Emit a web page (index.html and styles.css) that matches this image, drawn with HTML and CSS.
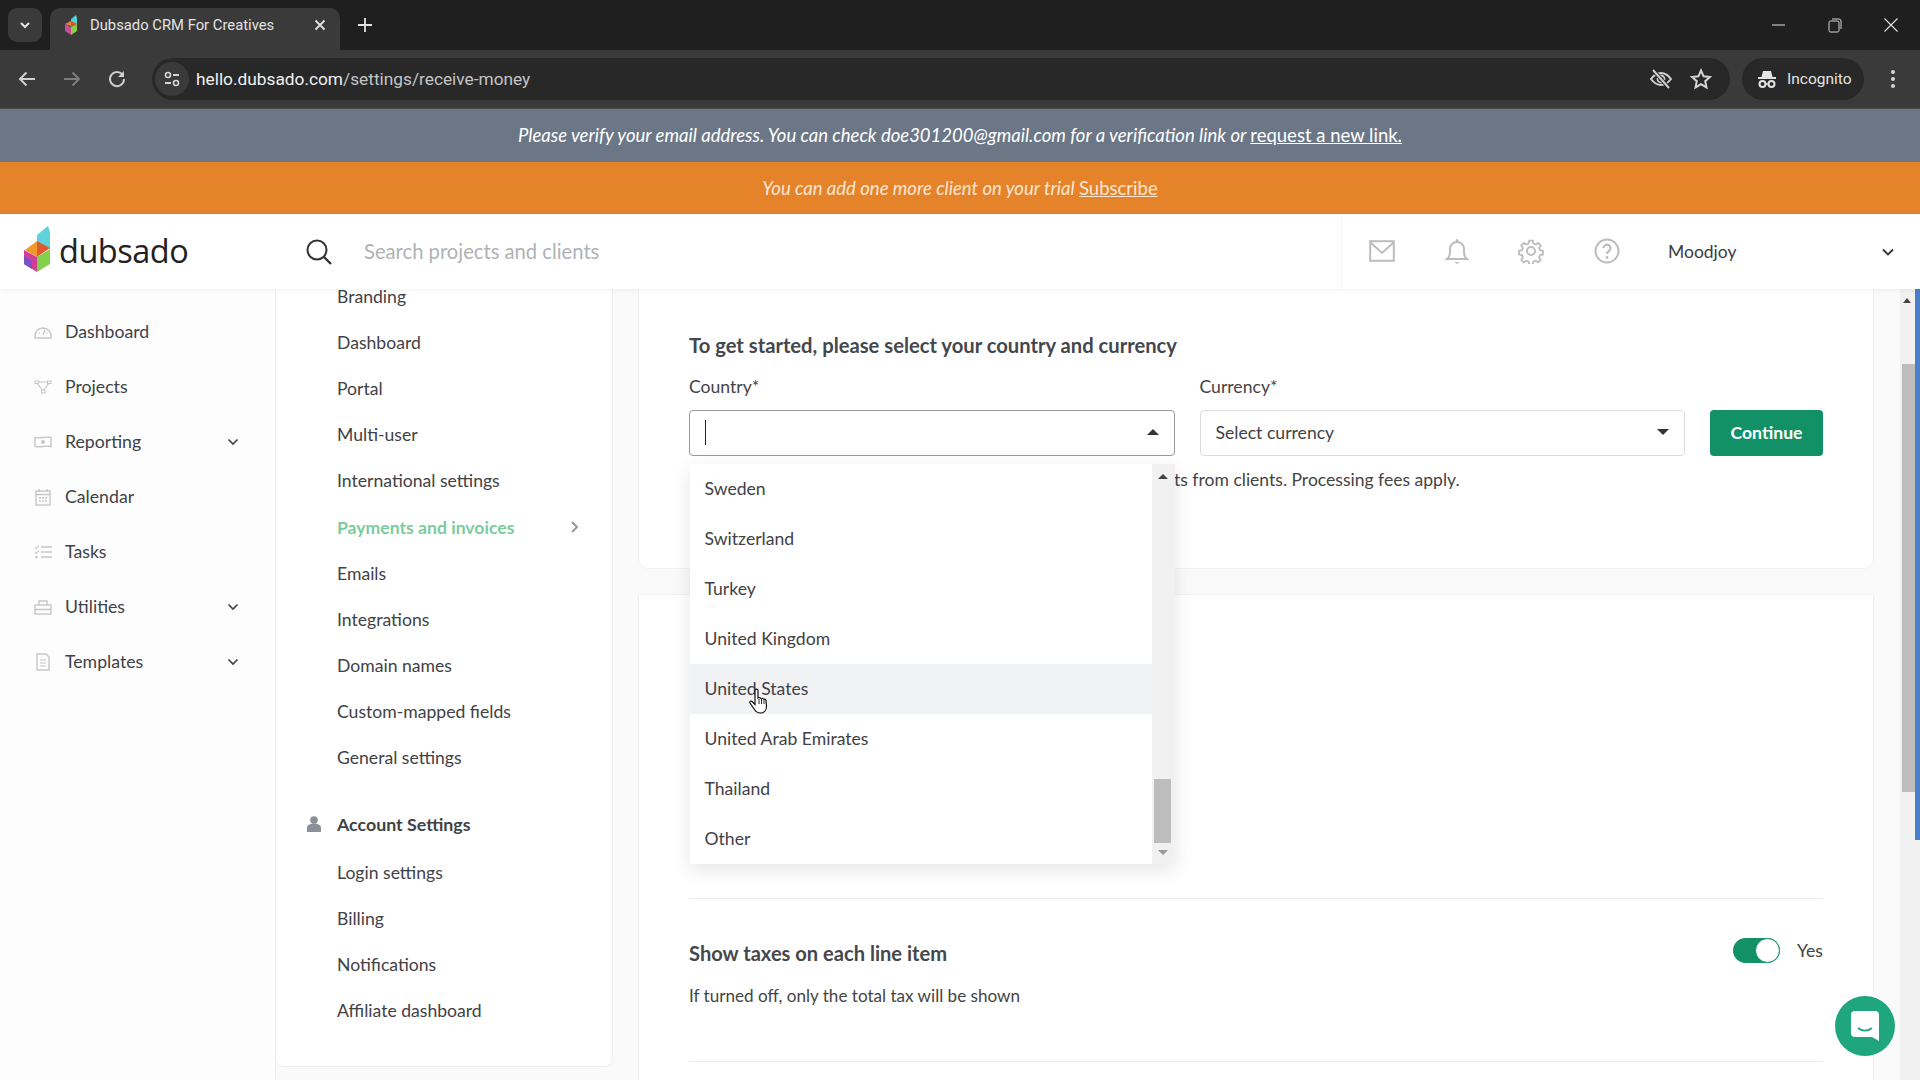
FILE: index.html
```html
<!DOCTYPE html>
<html lang="en">
<head>
    <meta charset="UTF-8">
    <title>Dubsado CRM For Creatives</title>
    <link rel="stylesheet" href="styles.css">
</head>
<body>
    <div class="tabstrip">
        <div class="tab-search">
            <svg width="14" height="14" viewBox="0 0 14 14"><path d="M3 5l4 4 4-4" fill="none" stroke="#e3e3e3" stroke-width="2"/></svg>
        </div>
        <div class="tab">
            <svg class="favicon" width="14" height="20" viewBox="0 0 14 20">
                <polygon points="7,4 12,0 13,3 13,9 7,11" fill="#55cfd6"/>
                <polygon points="1,9 7,6 7,11" fill="#e8862c"/>
                <polygon points="7,6 13,9 7,12" fill="#d9502f"/>
                <polygon points="1,9 7,12 7,20 1,16" fill="#c84a9a"/>
                <polygon points="7,12 13,9 13,16 7,20" fill="#8ccc45"/>
            </svg>
            <span class="tab-title">Dubsado CRM For Creatives</span>
            <svg class="tab-close" width="14" height="14" viewBox="0 0 14 14"><path d="M2.5 2.5l9 9M11.5 2.5l-9 9" stroke="#e3e3e3" stroke-width="1.8"/></svg>
        </div>
        <svg class="new-tab" width="16" height="16" viewBox="0 0 16 16"><path d="M8 1v14M1 8h14" stroke="#e3e3e3" stroke-width="1.8"/></svg>
        <div class="window-controls">
            <svg width="16" height="16" viewBox="0 0 16 16"><path d="M1 8h13" stroke="#e3e3e3" stroke-width="1"/></svg>
            <svg width="16" height="16" viewBox="0 0 16 16"><rect x="2" y="4" width="10" height="11" rx="1.5" fill="none" stroke="#d5d5d5"/><path d="M5 2h7a2 2 0 0 1 2 2v8" fill="none" stroke="#d5d5d5"/></svg>
            <svg width="16" height="16" viewBox="0 0 16 16"><path d="M1.5 1.5l13 13M14.5 1.5l-13 13" stroke="#e3e3e3" stroke-width="1.1"/></svg>
        </div>
    </div>

    <div class="toolbar">
        <svg width="20" height="20" viewBox="0 0 20 20"><path d="M18 10H3M9.5 3.5L3 10l6.5 6.5" fill="none" stroke="#cfcfcf" stroke-width="2"/></svg>
        <svg width="20" height="20" viewBox="0 0 20 20"><path d="M2 10h15M10.500 3.500L17 10l-6.500 6.500" fill="none" stroke="#7d7d7d" stroke-width="2"/></svg>
        <svg width="20" height="20" viewBox="0 0 20 20"><path d="M16 6.500A7 7 0 1 0 17 10" fill="none" stroke="#cfcfcf" stroke-width="2"/><path d="M17 2v6h-6z" fill="#cfcfcf"/></svg>
        <div class="address-bar">
            <div class="site-info">
                <svg width="18" height="18" viewBox="0 0 18 18"><circle cx="5" cy="5" r="2.500" fill="none" stroke="#d5d5d5" stroke-width="1.600"/><path d="M10 5h6M2 13h6" stroke="#d5d5d5" stroke-width="1.800"/><circle cx="13" cy="13" r="2.500" fill="none" stroke="#d5d5d5" stroke-width="1.600"/></svg>
            </div>
            <span class="url">hello.dubsado.com<span class="url-path">/settings/receive-money</span></span>
            <svg class="eye-off" width="24" height="22" viewBox="0 0 24 22"><path d="M2 11c3-4 6.500-6 10-6s7 2 10 6c-3 4-6.500 6-10 6s-7-2-10-6z" fill="none" stroke="#cfcfcf" stroke-width="2"/><circle cx="12" cy="11" r="3.500" fill="none" stroke="#cfcfcf" stroke-width="1.800"/><path d="M4 2l16 18" stroke="#282828" stroke-width="4"/><path d="M4 2l16 18" stroke="#cfcfcf" stroke-width="2"/></svg>
            <svg class="star" width="22" height="22" viewBox="0 0 22 22"><path d="M11 2.500l2.600 5.800 6.300.7-4.700 4.200 1.300 6.200L11 16.200l-5.500 3.200 1.300-6.200L2.100 9l6.300-.7z" fill="none" stroke="#d5d5d5" stroke-width="2"/></svg>
        </div>
        <div class="incognito">
            <svg width="20" height="20" viewBox="0 0 20 20"><path d="M6 2h8l1.500 6h-11z" fill="#e3e3e3"/><path d="M1 9h18" stroke="#e3e3e3" stroke-width="2"/><circle cx="5.500" cy="15" r="3" fill="none" stroke="#e3e3e3" stroke-width="2"/><circle cx="14.500" cy="15" r="3" fill="none" stroke="#e3e3e3" stroke-width="2"/><path d="M8.500 15h3" stroke="#e3e3e3" stroke-width="1.500"/></svg>
            <span>Incognito</span>
        </div>
        <svg class="chrome-menu" width="6" height="20" viewBox="0 0 6 20"><circle cx="3" cy="3" r="2" fill="#d5d5d5"/><circle cx="3" cy="10" r="2" fill="#d5d5d5"/><circle cx="3" cy="17" r="2" fill="#d5d5d5"/></svg>
    </div>

    <div class="banner banner-verify">
        <p>Please verify your email address. You can check doe301200@gmail.com for a verification link or <a>request a new link.</a></p>
    </div>
    <div class="banner banner-trial">
        <p>You can add one more client on your trial <a>Subscribe</a></p>
    </div>

    <header class="app-header">
        <div class="brand">
            <svg class="brand-mark" width="28" height="46" viewBox="0 0 28 46">
                <polygon points="14,9 25,0 27,6 27,23 14,16" fill="#5fd3dc"/>
                <polygon points="2,24 14,15 19,23 14,31" fill="#ef9a2c"/>
                <polygon points="14,15 27,22 14,31" fill="#df5a30"/>
                <polygon points="1,24 14,31 14,46 1,38" fill="#cf3f97"/>
                <polygon points="1,30 9,35 9,43 1,38" fill="#7e50c6"/>
                <polygon points="14,31 27,23 27,38 14,46" fill="#83d04d"/>
            </svg>
            <span class="brand-name">dubsado</span>
        </div>
        <div class="search">
            <svg width="28" height="28" viewBox="0 0 28 28"><circle cx="12" cy="12" r="9.500" fill="none" stroke="#333" stroke-width="2"/><path d="M19 19l7 7" stroke="#333" stroke-width="2.400"/></svg>
            <span class="search-placeholder">Search projects and clients</span>
        </div>
        <div class="header-icons">
            <svg width="26" height="22" viewBox="0 0 26 22"><rect x="1.200" y="1.200" width="23.600" height="19.600" fill="none" stroke="#bdbdbd" stroke-width="2"/><path d="M1.500 2.500L13 13 24.500 2.500" fill="none" stroke="#bdbdbd" stroke-width="2"/></svg>
            <svg width="24" height="28" viewBox="0 0 24 28"><path d="M2 22c3-2.500 3-5 3-10a7 7 0 0 1 14 0c0 5 0 7.500 3 10z" fill="none" stroke="#bdbdbd" stroke-width="2"/><circle cx="12" cy="3.500" r="1.500" fill="#bdbdbd"/><path d="M9 25h6l-3 2z" fill="#bdbdbd"/></svg>
            <svg width="26" height="26" viewBox="0 0 26 26"><path d="M11 1.500h4l.7 3.300 2.500 1 2.800-1.800 2.800 2.800-1.800 2.800 1 2.500 3.300.7v4l-3.300.7-1 2.500 1.800 2.800-2.800 2.800-2.800-1.800-2.500 1-.7 3.300h-4l-.7-3.300-2.500-1-2.800 1.800-2.800-2.800 1.800-2.800-1-2.500-3.300-.7v-4l3.300-.7 1-2.500-1.800-2.800 2.800-2.800 2.800 1.800 2.500-1z" transform="translate(1.300 1.300) scale(.9)" fill="none" stroke="#bdbdbd" stroke-width="2"/><circle cx="13" cy="13" r="4" fill="none" stroke="#bdbdbd" stroke-width="2"/></svg>
            <svg width="26" height="26" viewBox="0 0 26 26"><circle cx="13" cy="13" r="11.500" fill="none" stroke="#bdbdbd" stroke-width="2"/><path d="M9.500 10a3.500 3.500 0 1 1 5.500 3c-1.300.9-2 1.500-2 3" fill="none" stroke="#bdbdbd" stroke-width="2.200"/><circle cx="13" cy="19.500" r="1.400" fill="#bdbdbd"/></svg>
        </div>
        <div class="account">
            <span>Moodjoy</span>
            <svg class="chevron" width="14" height="14" viewBox="0 0 14 14"><path d="M2 4.500l5 5 5-5" fill="none" stroke="#333" stroke-width="1.800"/></svg>
        </div>
    </header>

    <div class="page">
        <nav class="sidebar">
            <a class="side-item">
                <svg class="side-icon" width="18" height="14" viewBox="0 0 18 14"><path d="M1 11a8 8 0 1 1 16 0v2H1z" fill="none" stroke="#c4c6c8" stroke-width="1.400"/><path d="M9 10l2-5M5 8h1M12.500 8h1" stroke="#c4c6c8" stroke-width="1.300"/></svg>
                <span>Dashboard</span>
            </a>
            <a class="side-item">
                <svg class="side-icon" width="18" height="14" viewBox="0 0 18 14"><path d="M3 2h12M3 3l6 8M15 3l-6 8" stroke="#c4c6c8" stroke-width="1.200"/><rect x="1" y="1" width="3.500" height="2.500" fill="#fff" stroke="#c4c6c8"/><rect x="13.500" y="1" width="3.500" height="2.500" fill="#fff" stroke="#c4c6c8"/><rect x="7.500" y="10" width="3.500" height="3" fill="#fff" stroke="#c4c6c8"/></svg>
                <span>Projects</span>
            </a>
            <a class="side-item">
                <svg class="side-icon" width="18" height="14" viewBox="0 0 18 14"><path d="M1 2.500c5 1.500 11-1.500 16 0v9c-5-1.500-11 1.500-16 0z" fill="none" stroke="#c4c6c8" stroke-width="1.400"/><circle cx="9" cy="7" r="2" fill="#c4c6c8"/></svg>
                <span>Reporting</span>
                <svg class="side-chevron" width="12" height="12" viewBox="0 0 12 12"><path d="M1.500 3.500L6 8l4.500-4.500" fill="none" stroke="#444" stroke-width="1.700"/></svg>
            </a>
            <a class="side-item">
                <svg class="side-icon" width="18" height="18" viewBox="0 0 18 18"><rect x="2" y="3" width="14" height="14" fill="none" stroke="#c4c6c8" stroke-width="1.400"/><path d="M2 6.500h14M5 1v3M13 1v3" stroke="#c4c6c8" stroke-width="1.400"/><path d="M5 10h8M5 13h8" stroke="#c4c6c8" stroke-width="1.500" stroke-dasharray="2 1"/></svg>
                <span>Calendar</span>
            </a>
            <a class="side-item">
                <svg class="side-icon" width="18" height="14" viewBox="0 0 18 14"><path d="M7 2h11M7 7h11M7 12h11" stroke="#c4c6c8" stroke-width="1.400"/><path d="M1 2l1.500 1.500L5 .5M1 7l1.500 1.500L5 5.500" fill="none" stroke="#c4c6c8" stroke-width="1.100"/><circle cx="2.500" cy="12" r="1.300" fill="#c4c6c8"/></svg>
                <span>Tasks</span>
            </a>
            <a class="side-item">
                <svg class="side-icon" width="18" height="16" viewBox="0 0 18 16"><rect x="1" y="6" width="16" height="9" fill="none" stroke="#c4c6c8" stroke-width="1.400"/><path d="M5 6V2h8v4M1 10.500h16" fill="none" stroke="#c4c6c8" stroke-width="1.400"/></svg>
                <span>Utilities</span>
                <svg class="side-chevron" width="12" height="12" viewBox="0 0 12 12"><path d="M1.500 3.500L6 8l4.500-4.500" fill="none" stroke="#444" stroke-width="1.700"/></svg>
            </a>
            <a class="side-item">
                <svg class="side-icon" width="18" height="18" viewBox="0 0 18 18"><path d="M3 1h9l3 3v13H3z" fill="none" stroke="#c4c6c8" stroke-width="1.400"/><path d="M6 7h6M6 10h6M6 13h6" stroke="#c4c6c8" stroke-width="1.200"/></svg>
                <span>Templates</span>
                <svg class="side-chevron" width="12" height="12" viewBox="0 0 12 12"><path d="M1.500 3.500L6 8l4.500-4.500" fill="none" stroke="#444" stroke-width="1.700"/></svg>
            </a>
        </nav>

        <nav class="settings-nav">
            <a class="settings-item">Branding</a>
            <a class="settings-item">Dashboard</a>
            <a class="settings-item">Portal</a>
            <a class="settings-item">Multi-user</a>
            <a class="settings-item">International settings</a>
            <a class="settings-item is-active">Payments and invoices
                <svg width="10" height="14" viewBox="0 0 10 14"><path d="M2 2l5 5-5 5" fill="none" stroke="#999" stroke-width="2"/></svg>
            </a>
            <a class="settings-item">Emails</a>
            <a class="settings-item">Integrations</a>
            <a class="settings-item">Domain names</a>
            <a class="settings-item">Custom-mapped fields</a>
            <a class="settings-item">General settings</a>
            <div class="settings-heading">
                <svg width="14" height="16" viewBox="0 0 14 16"><circle cx="7" cy="4" r="3.800" fill="#8a8f98"/><path d="M0 16v-4c0-3 3-4.500 7-4.500s7 1.500 7 4.500v4z" fill="#8a8f98"/></svg>
                <span>Account Settings</span>
            </div>
            <a class="settings-item">Login settings</a>
            <a class="settings-item">Billing</a>
            <a class="settings-item">Notifications</a>
            <a class="settings-item">Affiliate dashboard</a>
        </nav>

        <main class="content">
            <section class="card card-setup">
                <h2 class="card-title">To get started, please select your country and currency</h2>
                <div class="form-row">
                    <div class="field">
                        <label>Country*</label>
                        <div class="select is-open">
                            <span class="caret-bar"></span>
                            <span class="arrow arrow-up"></span>
                        </div>
                    </div>
                    <div class="field">
                        <label>Currency*</label>
                        <div class="select">
                            <span>Select currency</span>
                            <span class="arrow arrow-down"></span>
                        </div>
                    </div>
                    <button class="btn-continue">Continue</button>
                </div>
                <p class="help-text">ts from clients. Processing fees apply.</p>
            </section>

            <section class="card card-tax">
                <div class="tax-row">
                    <div>
                        <h3 class="tax-title">Show taxes on each line item</h3>
                        <p class="tax-note">If turned off, only the total tax will be shown</p>
                    </div>
                    <div class="toggle-wrap">
                        <span class="toggle"><span class="toggle-knob"></span></span>
                        <span>Yes</span>
                    </div>
                </div>
            </section>

            <div class="dropdown">
                <ul class="dropdown-list">
                    <li>Sweden</li>
                    <li>Switzerland</li>
                    <li>Turkey</li>
                    <li>United Kingdom</li>
                    <li class="is-hover">United States</li>
                    <li>United Arab Emirates</li>
                    <li>Thailand</li>
                    <li>Other</li>
                </ul>
                <div class="dropdown-scroll">
                    <span class="mini-up"></span>
                    <span class="mini-thumb"></span>
                    <span class="mini-down"></span>
                </div>
            </div>
        </main>

        <div class="page-scrollbar">
            <span class="page-scroll-up"></span>
            <span class="page-thumb"></span>
        </div>

        <div class="chat-button">
            <svg width="28" height="30" viewBox="0 0 28 30"><path d="M4 0h20a4 4 0 0 1 4 4v26l-7-4H4a4 4 0 0 1-4-4V4a4 4 0 0 1 4-4z" fill="#fff"/><path d="M7 17c4 3.500 10 3.500 14 0" fill="none" stroke="#1fa67e" stroke-width="1.800"/></svg>
        </div>

        <svg class="hand-cursor" width="20" height="26" viewBox="0 0 20 26"><path d="M6 2c1-1.500 3-1 3 .5V10l1-.5c1 0 1.500.3 2 1 1-.5 2 0 2.500.8 1-.3 2 .2 2.500 1l.5 6c0 4-2.500 6.700-6 6.700-3 0-4.500-1-6-3.500L1 15c-.7-1.500 1-2.500 2-1.500l3 3z" fill="#fff" stroke="#111" stroke-width="1.200"/><path d="M10 11v5M12.500 11v5M15 12v4" stroke="#111" stroke-width=".9"/></svg>
    </div>
</body>
</html>
```

FILE: styles.css
```css
* {
    box-sizing: border-box;
}

html, body {
    margin: 0;
    height: 1080px;
    overflow: hidden;
}

body {
    display: flex;
    flex-direction: column;
    font-family: "Lato", "Liberation Sans", sans-serif;
    color: #3a3d42;
    background: #fafafa;
}

/* browser chrome */
.tabstrip {
    height: 50px;
    flex: none;
    display: flex;
    align-items: flex-end;
    background: #1f1f1f;
    padding-left: 8px;
    color: #e3e3e3;
    font-family: "Roboto", "Liberation Sans", sans-serif;
}

.tab-search {
    width: 34px;
    height: 34px;
    margin-bottom: 8px;
    border-radius: 9px;
    background: #3a3a3a;
    display: flex;
    align-items: center;
    justify-content: center;
}

.tab {
    width: 290px;
    height: 42px;
    margin-left: 8px;
    padding: 0 13px 8px 14px;
    border-radius: 10px 10px 0 0;
    background: #3a3a3a;
    display: flex;
    align-items: center;
}

.favicon {
    flex: none;
}

.tab-title {
    margin-left: 12px;
    flex: 1;
    font-size: 14.800px;
}

.new-tab {
    margin: 0 0 17px 17px;
}

.window-controls {
    margin-left: auto;
    margin-bottom: 17px;
    padding-right: 21px;
    display: flex;
    gap: 40px;
}

.toolbar {
    height: 59px;
    flex: none;
    display: flex;
    align-items: center;
    gap: 25px;
    padding-left: 17px;
    background: #3a3a3a;
    border-bottom: 1px solid #4a4a4a;
}

.address-bar {
    width: 1578px;
    height: 42px;
    border-radius: 21px;
    background: #282828;
    display: flex;
    align-items: center;
    color: #e3e3e3;
    font-family: "Roboto", "Liberation Sans", sans-serif;
}

.site-info {
    width: 34px;
    height: 34px;
    margin-left: 3px;
    border-radius: 50%;
    background: #3a3a3a;
    display: flex;
    align-items: center;
    justify-content: center;
}

.url {
    margin-left: 7px;
    font-size: 17.300px;
    color: #f1f1f1;
}

.url-path {
    color: #c4c4c4;
}

.eye-off {
    margin-left: auto;
}

.star {
    margin: 0 18px 0 17px;
}

.incognito {
    width: 122px;
    height: 42px;
    margin-left: -13px;
    padding-left: 15px;
    border-radius: 21px;
    background: #282828;
    color: #e3e3e3;
    display: flex;
    align-items: center;
    gap: 10px;
    font-size: 15.500px;
    font-family: "Roboto", "Liberation Sans", sans-serif;
}

.chrome-menu {
    margin-left: 1px;
}

/* notice banners */
.banner {
    flex: none;
    display: flex;
    align-items: center;
    justify-content: center;
    font-style: italic;
    font-size: 18.500px;
}

.banner p {
    margin: 0;
}

.banner a {
    font-style: normal;
    text-decoration: underline;
}

.banner-verify {
    height: 53px;
    padding-bottom: 2px;
    background: #6b7787;
    color: #fff;
}

.banner-trial {
    height: 52px;
    background: #e5832b;
    color: #fbe6d2;
}

/* app header */
.app-header {
    height: 75px;
    flex: none;
    display: flex;
    align-items: center;
    background: #fff;
    box-shadow: 0 1px 6px rgba(0, 0, 0, .06);
    position: relative;
    z-index: 2;
}

.brand {
    width: 275px;
    flex: none;
    padding-left: 23px;
    display: flex;
    align-items: center;
    gap: 8px;
}

.brand-mark {
    margin-top: -5px;
}

.brand-name {
    font-size: 32.500px;
    color: #222;
    font-family: "Open Sans", "Liberation Sans", sans-serif;
    letter-spacing: -.5px;
    margin-top: -3px;
}

.search {
    width: 1067px;
    flex: none;
    height: 100%;
    padding-left: 30px;
    display: flex;
    align-items: center;
    gap: 31px;
    border-right: 1px solid #f6f6f6;
}

.search-placeholder {
    font-size: 20.200px;
    color: #b0b2b5;
    margin-bottom: 2px;
}

.header-icons {
    width: 326px;
    flex: none;
    padding: 0 0 2px 27px;
    display: flex;
    align-items: center;
    gap: 49.500px;
}

.account {
    flex: 1;
    padding-right: 25px;
    display: flex;
    align-items: center;
    justify-content: space-between;
    font-size: 17.500px;
}

/* main layout */
.page {
    position: relative;
    flex: 1;
    display: flex;
    min-height: 0;
}

.sidebar {
    width: 276px;
    flex: none;
    padding-top: 15px;
    border-right: 1px solid #eeeeee;
    background: #fdfdfd;
}

.side-item {
    height: 55px;
    padding: 0 36px 0 34px;
    display: flex;
    align-items: center;
    font-size: 17.700px;
    color: #3f4246;
}

.side-icon {
    flex: none;
    margin-right: 13px;
}

.side-chevron {
    margin-left: auto;
}

.settings-nav {
    width: 337px;
    height: 794px;
    margin-top: -16px;
    flex: none;
    padding: 0 32px 0 61px;
    background: #fff;
    border-right: 1px solid #eeeeee;
    border-bottom: 1px solid #eeeeee;
    border-radius: 0 0 8px 8px;
}

.settings-item {
    height: 46.200px;
    display: flex;
    align-items: center;
    justify-content: space-between;
    font-size: 17.600px;
    color: #3f4246;
}

.settings-item.is-active {
    color: #7ccb9f;
    font-weight: 700;
}

.settings-heading {
    position: relative;
    height: 50px;
    margin-top: 18px;
    display: flex;
    align-items: center;
    font-size: 17.800px;
    font-weight: 700;
    color: #3f4246;
}

.settings-heading svg {
    position: absolute;
    left: -30px;
}

.content {
    width: 1262px;
    flex: none;
    padding-left: 25px;
    overflow: hidden;
}

.card {
    width: 1236px;
    background: #fff;
    border: 1px solid #f2f2f2;
    padding: 0 50px;
}

.card-setup {
    height: 280px;
    border-top: none;
    border-radius: 0 0 10px 10px;
    padding-top: 42px;
}

.card-title {
    margin: 0;
    font-size: 20.200px;
    font-weight: 700;
    line-height: 28px;
    color: #44474c;
}

.form-row {
    margin-top: 17px;
    display: flex;
    align-items: flex-end;
    gap: 25px;
}

.field {
    flex: 1;
}

.field label {
    display: block;
    margin-bottom: 12px;
    font-size: 17.600px;
    line-height: 22px;
    color: #444;
}

.select {
    height: 46px;
    padding: 0 15px 2px;
    border: 1px solid #dcdcdc;
    border-radius: 4px;
    display: flex;
    align-items: center;
    justify-content: space-between;
    font-size: 17.600px;
    color: #3f4246;
}

.select.is-open {
    border-color: #9a9a9a;
}

.caret-bar {
    width: 1px;
    height: 25px;
    background: #222;
}

.arrow {
    width: 0;
    height: 0;
    border-left: 6px solid transparent;
    border-right: 6px solid transparent;
}

.arrow-up {
    border-bottom: 6px solid #333;
}

.arrow-down {
    border-top: 6px solid #333;
}

.btn-continue {
    width: 113px;
    height: 46px;
    flex: none;
    padding-bottom: 2px;
    border: none;
    border-radius: 4px;
    background: #129166;
    color: #fff;
    font-family: inherit;
    font-size: 17.600px;
    font-weight: 700;
}

.help-text {
    margin: 12px 0 0 485px;
    font-size: 17.550px;
    line-height: 24px;
    color: #444;
}

.card-tax {
    height: 500px;
    margin-top: 25px;
    padding-top: 303px;
}

.tax-row {
    display: flex;
    justify-content: space-between;
    align-items: flex-start;
    height: 164px;
    padding-top: 40px;
    border-top: 1px solid #ececec;
    border-bottom: 1px solid #ececec;
}

.tax-title {
    margin: 0;
    font-size: 20.100px;
    font-weight: 700;
    line-height: 28px;
    color: #44474c;
}

.tax-note {
    margin: 17px 0 0;
    font-size: 17.100px;
    line-height: 24px;
    color: #444;
}

.toggle-wrap {
    display: flex;
    align-items: center;
    gap: 17px;
    margin-top: -1px;
    font-size: 17.600px;
    color: #444;
}

.toggle {
    width: 47px;
    height: 25px;
    border-radius: 13px;
    background: #129166;
    display: flex;
    justify-content: flex-end;
}

.toggle-knob {
    width: 25px;
    height: 25px;
    border-radius: 50%;
    background: #fff;
    border: 1px solid #129166;
}

/* country dropdown */
.dropdown {
    position: absolute;
    left: 690px;
    top: 175px;
    width: 485px;
    height: 400px;
    display: flex;
    background: #f1f1f1;
    box-shadow: 0 6px 18px rgba(0, 0, 0, .1);
    z-index: 3;
}

.dropdown-list {
    margin: 0;
    padding: 0;
    width: 462px;
    list-style: none;
    background: #fff;
}

.dropdown-list li {
    height: 50px;
    padding: 0 0 2px 14.500px;
    display: flex;
    align-items: center;
    font-size: 17.600px;
    color: #3f4246;
}

.dropdown-list li.is-hover {
    background: #f1f2f4;
}

.dropdown-scroll {
    position: relative;
    flex: 1;
}

.mini-up {
    position: absolute;
    top: 10px;
    left: 6px;
    border-left: 5px solid transparent;
    border-right: 5px solid transparent;
    border-bottom: 5px solid #444;
}

.mini-thumb {
    position: absolute;
    top: 315px;
    left: 2px;
    width: 17px;
    height: 64px;
    background: #bdbdbd;
}

.mini-down {
    position: absolute;
    bottom: 9px;
    left: 6px;
    border-left: 5px solid transparent;
    border-right: 5px solid transparent;
    border-top: 5px solid #999;
}

/* page scrollbar, chat, cursor */
.page-scrollbar {
    position: relative;
    width: 20px;
    margin-left: auto;
    flex: none;
    background: #f1f1f1;
    border-right: 5px solid #f1f1f1;
}

.page-scroll-up {
    position: absolute;
    top: 9px;
    left: 3px;
    border-left: 4px solid transparent;
    border-right: 4px solid transparent;
    border-bottom: 5px solid #444;
}

.page-thumb {
    position: absolute;
    top: 75px;
    left: 2px;
    width: 13px;
    height: 428px;
    background: #bdbdbd;
}

.page-scrollbar::after {
    content: "";
    position: absolute;
    top: -49px;
    left: 15px;
    width: 5px;
    height: 600px;
    background: #4a7fc9;
}

.chat-button {
    position: absolute;
    left: 1835px;
    top: 707px;
    width: 60px;
    height: 60px;
    border-radius: 50%;
    background: #1fa67e;
    display: flex;
    align-items: center;
    justify-content: center;
    z-index: 4;
}

.hand-cursor {
    position: absolute;
    left: 749px;
    top: 399px;
    z-index: 5;
}
```
